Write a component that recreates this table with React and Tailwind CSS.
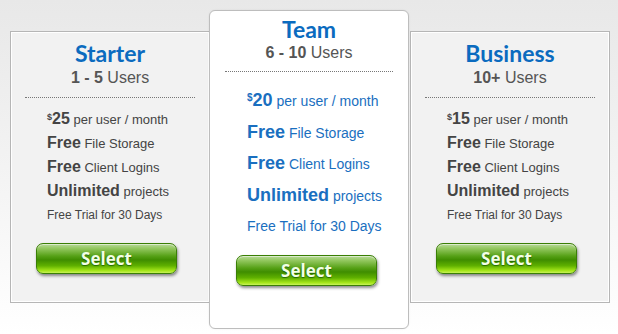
import React from "react";

const font = { fontFamily: '"Liberation Sans", Arial, sans-serif' };
const titleFont = { fontFamily: 'Lato, "Liberation Sans", sans-serif' };

function SelectButton({ className = "" }) {
  return (
    <div
      className={
        "flex h-[31px] w-[141px] items-center justify-center rounded-[7px] border border-[#3a7f05] bg-[linear-gradient(to_bottom,#b8d99a_0%,#94c860_15%,#55a015_42%,#3f8d00_55%,#5fb000_75%,#a5e619_92%,#c8f25a_100%)] shadow-[1px_2px_3px_rgba(0,0,0,0.45),inset_0_1px_0_rgba(255,255,255,0.5)] " +
        className
      }
    >
      <span
        className="text-[17px] font-bold leading-none text-[#f3ffe6] [text-shadow:0_1px_1px_rgba(0,60,0,0.6)]"
        style={{ fontFamily: '"Open Sans", "Liberation Sans", sans-serif' }}
      >
        Select
      </span>
    </div>
  );
}

function SideCard({ title, bold, rest, price }) {
  const row = "h-[24px] leading-[24px] whitespace-nowrap";
  return (
    <div className="flex h-[272px] w-[200px] flex-col border border-[#b6b6b6] bg-[#f2f2f2] shadow-[inset_0_0_0_1px_#ffffff]">
      <div className="mt-[8px] text-center text-[23px] font-bold leading-[26px] text-[#0b6bbf]" style={titleFont}>
        {title}
      </div>
      <div className="mt-[2px] text-center text-[16px] leading-[20px] text-[#555555]">
        <span className="font-bold">{bold}</span> {rest}
      </div>
      <div className="mx-[14px] mt-[9px] border-t border-dotted border-[#777777]" />
      <div className="mt-[9px] pl-[36px] text-[#444444]">
        <div className={row}>
          <sup className="text-[9px] font-bold">$</sup>
          <span className="text-[16px] font-bold">{price}</span>
          <span className="text-[13px]"> per user / month</span>
        </div>
        <div className={row}>
          <span className="text-[16px] font-bold">Free</span>
          <span className="text-[13px]"> File Storage</span>
        </div>
        <div className={row}>
          <span className="text-[16px] font-bold">Free</span>
          <span className="text-[13px]"> Client Logins</span>
        </div>
        <div className={row}>
          <span className="text-[16px] font-bold">Unlimited</span>
          <span className="text-[13px]"> projects</span>
        </div>
        <div className={row + " text-[12px]"}>Free Trial for 30 Days</div>
      </div>
      <SelectButton className="ml-[25px] mt-[16px]" />
    </div>
  );
}

function MiddleCard() {
  const row = "h-[31.5px] leading-[31.5px] whitespace-nowrap";
  return (
    <div className="relative z-10 -ml-px mt-[10px] flex h-[319px] w-[200px] flex-col rounded-[6px] border border-[#bdbdbd] bg-white shadow-[0_0_2px_rgba(0,0,0,0.08)]">
      <div className="mt-[5px] text-center text-[23px] font-bold leading-[26px] text-[#0b6bbf]" style={titleFont}>
        Team
      </div>
      <div className="mt-[1px] text-center text-[16px] leading-[20px] text-[#555555]">
        <span className="font-bold">6 - 10</span> Users
      </div>
      <div className="mx-[15px] mt-[8px] border-t border-dotted border-[#777777]" />
      <div className="mt-[13px] pl-[37px] text-[#1a6fc0]">
        <div className={row}>
          <sup className="text-[10px] font-bold">$</sup>
          <span className="text-[18px] font-bold">20</span>
          <span className="text-[14px]"> per user / month</span>
        </div>
        <div className={row}>
          <span className="text-[18px] font-bold">Free</span>
          <span className="text-[14px]"> File Storage</span>
        </div>
        <div className={row}>
          <span className="text-[18px] font-bold">Free</span>
          <span className="text-[14px]"> Client Logins</span>
        </div>
        <div className={row}>
          <span className="text-[18px] font-bold">Unlimited</span>
          <span className="text-[14px]"> projects</span>
        </div>
        <div className={row + " text-[14px]"}>Free Trial for 30 Days</div>
      </div>
      <SelectButton className="ml-[26px] mt-[12px]" />
    </div>
  );
}

export default function App() {
  return (
    <div
      className="h-[334px] w-[618px] overflow-hidden bg-[linear-gradient(to_bottom,#e8e8e8_0%,#f3f3f3_50%,#ffffff_100%)]"
      style={font}
    >
      <div className="flex items-start pl-[10px]">
        <div className="mt-[31px]">
          <SideCard title="Starter" bold="1 - 5" rest="Users" price="25" />
        </div>
        <MiddleCard />
        <div className="ml-[1px] mt-[31px]">
          <SideCard title="Business" bold="10+" rest="Users" price="15" />
        </div>
      </div>
    </div>
  );
}
